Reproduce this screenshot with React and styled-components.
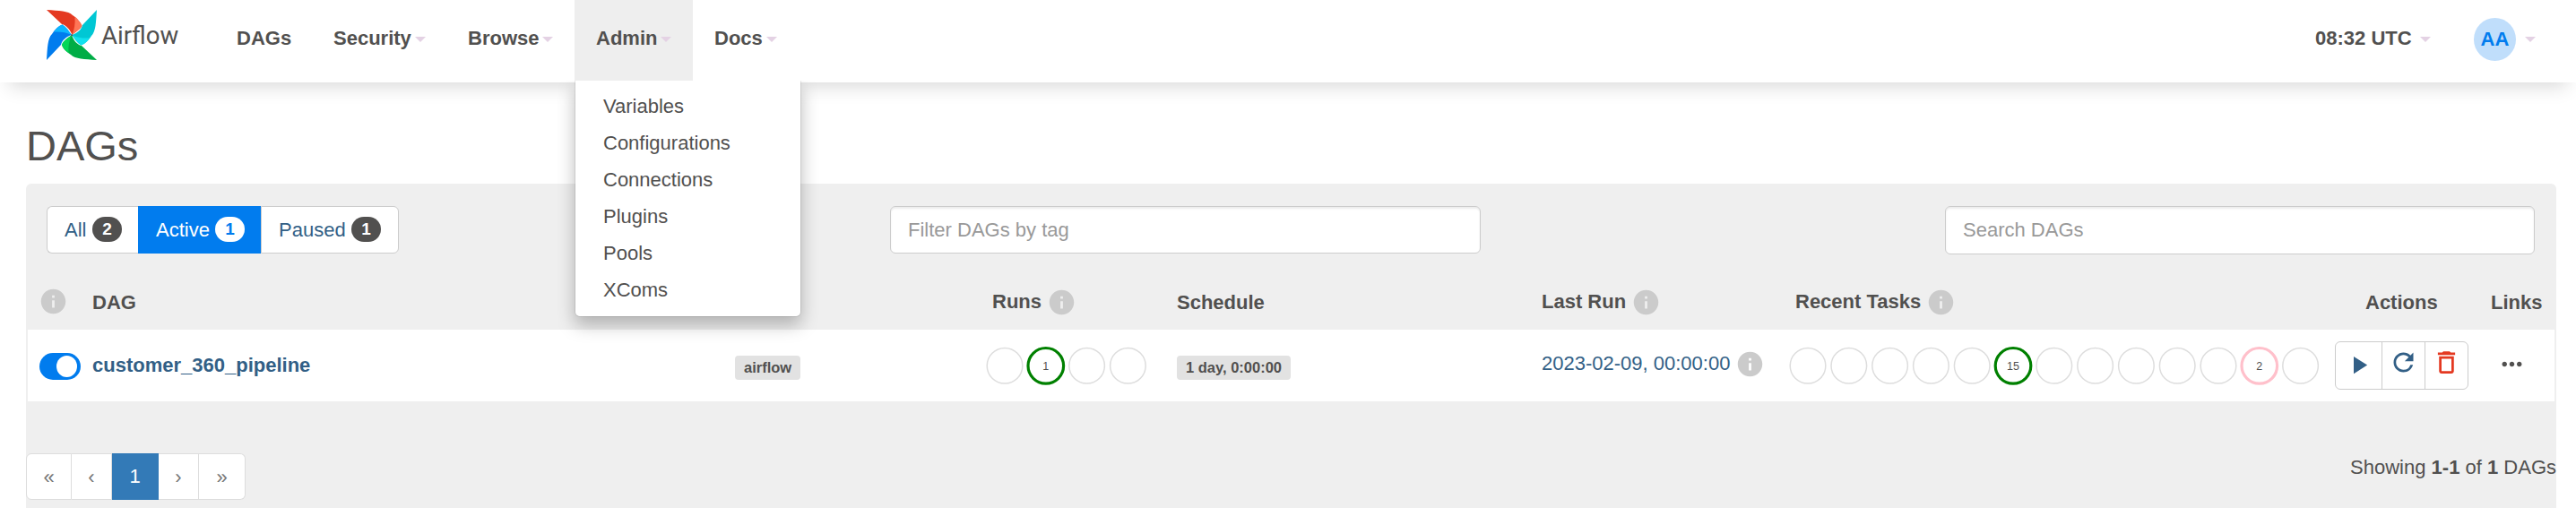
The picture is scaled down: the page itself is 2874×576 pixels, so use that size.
import React from 'react';
import styled, { createGlobalStyle, css } from 'styled-components';
import { MdPlayArrow, MdRefresh, MdDeleteOutline, MdMoreHoriz, MdInfo } from 'react-icons/md';

const Global = createGlobalStyle`
  * { box-sizing: border-box; }
  body { margin: 0; background: #fff; color: #51504f; font: 22px/31px "Liberation Sans", Arial, sans-serif; overflow: hidden; }
  a { color: inherit; text-decoration: none; }
`;

const Navbar = styled.nav`
  position: relative; z-index: 2;
  display: flex; height: 92px; padding-left: 52px; background: #fff;
  box-shadow: 0 14px 20px -10px rgba(0, 0, 0, 0.16);
`;
const Brand = styled.a`
  display: flex; align-items: flex-start; width: 188px; padding-top: 11px;
  svg { flex: none; width: 56px; height: 56px; }
`;
const BrandName = styled.span`
  margin: 13px 0 0 5px; font: 27.6px/32px Roboto, sans-serif; color: #51504f;
`;
const NavItem = styled.div`
  position: relative; display: flex; height: 90px; padding: 27px 24px 0;
  font-weight: bold; white-space: nowrap;
  ${p => p.$open && css`background: #eee;`}
  width: ${p => p.$w}px;
`;
const Caret = styled.span`
  flex: none; width: 0; height: 0; margin: 14px 0 0 ${p => p.$gap || 4}px;
  border: 6px solid transparent; border-top-color: #e4d2e4; border-bottom: 0;
`;
const Spacer = styled.div`flex: 1;`;
const Avatar = styled.span`
  flex: none; width: 47px; height: 48px; border-radius: 50%; margin-top: -7px;
  background: #c0defb; color: #017cee; text-align: center; line-height: 48px;
`;
const Menu = styled.div`
  position: absolute; top: 90px; left: 0; width: 253px; height: 264px; padding: 9px 0;
  background: #fff; background-clip: padding-box; border: 1px solid rgba(0, 0, 0, 0.08); border-top: 0;
  border-radius: 0 0 6px 6px; box-shadow: 0 9px 19px rgba(0, 0, 0, 0.26); clip-path: inset(0 -40px -50px -40px);
  font-weight: normal;
`;
const MenuItem = styled.a`display: block; height: 41px; padding: 4px 31px 6px;`;

const Main = styled.main`padding: 0 22px 0 29px;`;
const Title = styled.h1`margin: 0; padding-top: 45px; height: 113px; font-weight: normal; font-size: 47px; line-height: 52px;`;
const Panel = styled.section`height: 362px; background: #efefef; border-radius: 6px 6px 0 0;`;
const Filters = styled.div`display: flex; align-items: flex-start; padding: 25px 24px 0 23px; height: 104px;`;
const Tabs = styled.div`display: flex; width: 393px; height: 53px; margin-right: 548px;`;
const Tab = styled.a`
  display: flex; width: ${p => p.$w}px; padding: 10px 0 0 19px; background: #fff; border: 1px solid #ccc; color: #325f86;
  &:first-child { border-radius: 6px 0 0 6px; border-right: 0; }
  &:last-child { border-radius: 0 6px 6px 0; }
  ${p => p.$active && css`background: #017cee; border-color: #017cee; color: #fff;`}
`;
const Badge = styled.span`
  width: 33px; height: 28px; margin: 1px 0 0 auto; margin-right: ${p => p.$r}px; border-radius: 14px;
  font-size: 19px; font-weight: bold; line-height: 27px; text-align: center;
  background: ${p => (p.$light ? '#fff' : '#51504f')}; color: ${p => (p.$light ? '#017cee' : '#fff')};
`;
const Field = styled.input`
  width: ${p => p.$w}px; height: ${p => p.$h}px; padding: 0 19px; border: 1px solid #ccc; border-radius: 6px;
  background: #fff; font: inherit; box-shadow: inset 0 2px 2px rgba(0, 0, 0, 0.075);
  &::placeholder { color: #999; opacity: 1; }
`;

const grid = css`
  display: grid;
  grid-template-columns: 72px 717px 280px 213px 407px 276px 609px 159px 86px;
`;
const HeadRow = styled.div`${grid} height: 59px; padding-left: 2px; font-weight: bold;`;
const HeadCell = styled.div`
  display: flex; white-space: nowrap; padding: ${p => (p.$info ? 12 : 13)}px 0 0 ${p => p.$l || 0}px;
`;
const Info = styled(MdInfo)`flex: none; width: 33px; height: 33px; margin: ${p => p.$t || 0}px 0 0 ${p => p.$l ?? 6}px; color: #cbcbcb;`;
const Row = styled.div`${grid} height: 80px; margin: 0 2px; background: #fff;`;
const Cell = styled.div`display: flex; white-space: nowrap; padding: ${p => p.$t || 0}px 0 0 ${p => p.$l || 0}px;`;
const Toggle = styled.span`
  display: flex; justify-content: flex-end; width: 46px; height: 30px; padding: 3px 4px; border-radius: 15px; background: #017cee;
  &::after { content: ''; width: 23px; height: 24px; border-radius: 50%; background: #fff; }
`;
const DagLink = styled.a`color: #325f86; font-weight: ${p => (p.$bold ? 'bold' : 'normal')};`;
const Tag = styled.span`
  height: 27px; padding: 0 10px; border-radius: 4px; background: #e2e2e2;
  font-size: 16.5px; font-weight: bold; line-height: 27px;
`;
const States = styled.svg`
  display: block; height: 80px;
  circle { fill: none; stroke: #ddd; stroke-width: 1.5; }
  text { font-size: 12.5px; fill: #51504f; text-anchor: middle; }
`;
const ButtonGroup = styled.div`
  display: flex; width: 149px; height: 54px; border: 1px solid #ccc; border-radius: 6px; color: #325f86;
`;
const ActionButton = styled.a`
  flex: ${p => (p.$w ? `0 0 ${p.$w}px` : 1)}; display: flex; justify-content: center; padding-top: ${p => p.$t}px;
  & + & { border-left: 1px solid #ccc; }
  ${p => p.$danger && css`color: #e43921;`}
  svg { width: 33px; height: 33px; }
`;
const Footer = styled.div`display: flex; justify-content: space-between; padding-top: 58px;`;
const Pager = styled.div`display: flex; width: 245px; height: 52px;`;
const Page = styled.a`
  width: ${p => p.$w}px; padding-top: 10px; text-align: center; background: #fff; color: #777;
  border: 1px solid #ddd; border-left-width: ${p => (p.$first ? 1 : 0)}px;
  &:first-child { border-radius: 6px 0 0 6px; }
  &:last-child { border-radius: 0 6px 6px 0; }
  ${p => p.$active && css`background: #337ab7; border-color: #337ab7; color: #fff; padding-top: 9px;`}
`;
const Summary = styled.div`white-space: nowrap;`;

const Pinwheel = () => (
  <svg viewBox="0 0 56 56">
    <path d="M0 0C14 1 24 1 29 6C34 9 38 14 39.5 18C37 22 33 24 28.5 28C26 22 22 17 17 16Z" fill="#e43921" />
    <path d="M31.5 8C35 11 38 14 39.5 18C37 22 33 24 28.5 28C31 22 32 15 31.5 8Z" fill="#ff7557" />
    <path d="M56 0C55 14 55 24 50 29C47 34 43 38 38.5 39.5C34 37 32 33 28 28C34 26 39 22 40 17Z" fill="#00c7d4" />
    <path d="M48 31.5C45 35 43 38 38.5 39.5C34 37 32 33 28 28C34 31 41 32 48 31.5Z" fill="#11e1ee" />
    <path d="M56 56C42 55 32 55 27 50C22 47 18 43 17 39C19 34 23 32 28 28C30 34 34 39 39 40Z" fill="#00ad46" />
    <path d="M24.500 48C21 45 18 43 17 39C19 34 23 32 28 28C25 34 24 41 24.500 48Z" fill="#04d659" />
    <path d="M0 56C1 42 1 32 6 27C9 22 13 18 17.500 16.500C22 19 24 23 28 28C22 30 17 34 16 39Z" fill="#017cee" />
    <path d="M8 24.500C11 21 13 18 17.500 16.500C22 19 24 23 28 28C22 25 15 24 8 24.500Z" fill="#0cb6ff" />
    <circle cx="28.200" cy="28.200" r="1" fill="#51504f" />
  </svg>
);

const StateCircles = ({ count, marks }) => (
  <States width={count * 45.8 + 2}>
    {Array.from({ length: count }, (_, i) => {
      const mark = marks[i];
      const cx = 21 + i * 45.8;
      return (
        <g key={i}>
          <circle cx={cx} cy="40.3" r="19.8" style={mark && { stroke: mark.color, strokeWidth: 3.2 }} />
          {mark && <text x={cx} y="44.6">{mark.n}</text>}
        </g>
      );
    })}
  </States>
);

const menu = ['Variables', 'Configurations', 'Connections', 'Plugins', 'Pools', 'XComs'];

export default function App() {
  return (
    <>
      <Global />
      <Navbar>
        <Brand><Pinwheel /><BrandName>Airflow</BrandName></Brand>
        <NavItem $w={108}>DAGs</NavItem>
        <NavItem $w={150}>Security<Caret /></NavItem>
        <NavItem $w={143}>Browse<Caret /></NavItem>
        <NavItem $w={132} $open>
          Admin<Caret />
          <Menu>{menu.map(m => <MenuItem key={m}>{m}</MenuItem>)}</Menu>
        </NavItem>
        <NavItem $w={120}>Docs<Caret /></NavItem>
        <Spacer />
        <NavItem $w={177}>08:32 UTC<Caret $gap={9} /></NavItem>
        <NavItem $w={138}><Avatar>AA</Avatar><Caret $gap={10} /></NavItem>
      </Navbar>
      <Main>
        <Title>DAGs</Title>
        <Panel>
          <Filters>
            <Tabs>
              <Tab $w={102}>All<Badge $r={18}>2</Badge></Tab>
              <Tab $w={137} $active>Active<Badge $light $r={17}>1</Badge></Tab>
              <Tab $w={154}>Paused<Badge $r={19}>1</Badge></Tab>
            </Tabs>
            <Field $w={659} $h={53} placeholder="Filter DAGs by tag" />
            <Spacer />
            <Field $w={658} $h={54} placeholder="Search DAGs" />
          </Filters>
          <HeadRow>
            <HeadCell $info><Info $l={12} $t={-1} /></HeadCell>
            <HeadCell>DAG</HeadCell>
            <HeadCell />
            <HeadCell $info $l={7}>Runs<Info /></HeadCell>
            <HeadCell>Schedule</HeadCell>
            <HeadCell $info>Last Run<Info /></HeadCell>
            <HeadCell $info $l={7}>Recent Tasks<Info /></HeadCell>
            <HeadCell $l={34}>Actions</HeadCell>
            <HeadCell $l={15}>Links</HeadCell>
          </HeadRow>
          <Row>
            <Cell $l={13} $t={26}><Toggle /></Cell>
            <Cell $t={24}><DagLink $bold>customer_360_pipeline</DagLink></Cell>
            <Cell $t={29}><Tag>airflow</Tag></Cell>
            <Cell><StateCircles count={4} marks={{ 1: { n: 1, color: '#008000' } }} /></Cell>
            <Cell $t={29}><Tag>1 day, 0:00:00</Tag></Cell>
            <Cell $t={22}><DagLink>2023-02-09, 00:00:00</DagLink><Info $l={6} /></Cell>
            <Cell><StateCircles count={13} marks={{ 5: { n: 15, color: '#008000' }, 11: { n: 2, color: '#ffc0cb' } }} /></Cell>
            <Cell $t={13}>
              <ButtonGroup>
                <ActionButton $w={51} $t={9}><MdPlayArrow /></ActionButton>
                <ActionButton $t={6}><MdRefresh /></ActionButton>
                <ActionButton $t={6} $danger><MdDeleteOutline /></ActionButton>
              </ButtonGroup>
            </Cell>
            <Cell $l={22} $t={22}><MdMoreHoriz size={33} /></Cell>
          </Row>
          <Footer>
            <Pager>
              <Page $w={51} $first>«</Page>
              <Page $w={45}>‹</Page>
              <Page $w={52} $active>1</Page>
              <Page $w={45}>›</Page>
              <Page $w={52}>»</Page>
            </Pager>
            <Summary>Showing <b>1-1</b> of <b>1</b> DAGs</Summary>
          </Footer>
        </Panel>
      </Main>
    </>
  );
}
